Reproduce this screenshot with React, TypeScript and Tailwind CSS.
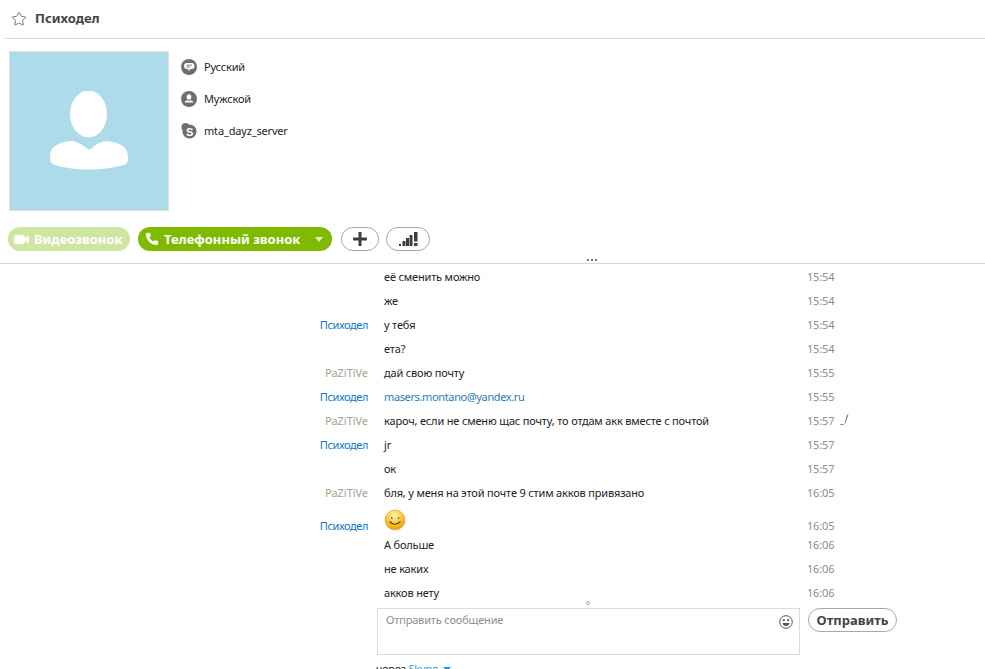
import { Star, Phone, Video } from "lucide-react";

type Msg = { name?: "p" | "z"; text: string; time: string; link?: boolean; warn?: boolean };

const messages: Msg[] = [
  { text: "её сменить можно", time: "15:54" },
  { text: "же", time: "15:54" },
  { name: "p", text: "у тебя", time: "15:54" },
  { text: "ета?", time: "15:54" },
  { name: "z", text: "дай свою почту", time: "15:55" },
  { name: "p", text: "masers.montano@yandex.ru", time: "15:55", link: true },
  { name: "z", text: "кароч, если не сменю щас почту, то отдам акк вместе с почтой", time: "15:57", warn: true },
  { name: "p", text: "jr", time: "15:57" },
  { text: "ок", time: "15:57" },
  { name: "z", text: "бля, у меня на этой почте 9 стим акков привязано", time: "16:05" },
];

const after: Msg[] = [
  { text: "А больше", time: "16:06" },
  { text: "не каких", time: "16:06" },
  { text: "акков нету", time: "16:06" },
];

function Row({ m }: { m: Msg }) {
  return (
    <div className="flex h-6 items-center pb-[2px]">
      <div className={"w-[368px] text-right " + (m.name === "p" ? "tracking-[-0.4px] text-[#0a78c8]" : "tracking-[-0.05px] text-[#a3a38f]")}>
        {m.name === "p" ? "Психодел" : m.name === "z" ? "PaZiTiVe" : ""}
      </div>
      <div className={"ml-[16px] w-[423px] " + (m.link ? "tracking-[-0.37px] text-[#2a7cb8]" : "text-[#222]")}>{m.text}</div>
      <div className="w-[33px] text-[#8c8c8c]">{m.time}</div>
      {m.warn && <WarnMark />}
    </div>
  );
}

function WarnMark() {
  return (
    <svg width="10" height="12" viewBox="0 0 10 12">
      <path d="M0 10.5h4" stroke="#999" fill="none" />
      <path d="M7 0.5L4.500 9.500h1L8.500 0.500z" fill="#888" />
    </svg>
  );
}

function Smiley() {
  return (
    <svg width="22" height="22" viewBox="0 0 22 22">
      <defs>
        <radialGradient id="face" cx="45%" cy="25%" r="80%">
          <stop offset="0%" stopColor="#fff3a0" />
          <stop offset="55%" stopColor="#fbc52e" />
          <stop offset="100%" stopColor="#ec9410" />
        </radialGradient>
      </defs>
      <circle cx="11" cy="11" r="10" fill="url(#face)" stroke="#d9962a" strokeWidth="0.6" />
      <ellipse cx="7.6" cy="8.6" rx="1.7" ry="1.3" fill="#fff" />
      <ellipse cx="14.4" cy="8.6" rx="1.7" ry="1.3" fill="#fff" />
      <circle cx="7.8" cy="8.8" r="0.9" fill="#4a3208" />
      <circle cx="14.6" cy="8.8" r="0.9" fill="#4a3208" />
      <path d="M5.5 12.5Q11 18 16.5 12.5" fill="none" stroke="#5b3c08" strokeWidth="1.1" />
    </svg>
  );
}

function InfoIcon({ kind }: { kind: "chat" | "user" | "skype" }) {
  return (
    <svg width="16" height="16" viewBox="0 0 16 16">
      {kind === "skype" ? (
        <>
          <circle cx="8.5" cy="8.5" r="7" fill="#6e6e70" />
          <circle cx="4.5" cy="4" r="4" fill="#6e6e70" />
          <text x="8.5" y="12.5" textAnchor="middle" fontSize="11" fontWeight="700" fill="#fff" fontFamily="'Liberation Sans', sans-serif">S</text>
        </>
      ) : (
        <circle cx="8" cy="8" r="8" fill="#6e6e70" />
      )}
      {kind === "chat" && (
        <>
          <path d="M6 4h4.500A3 3 0 0 1 13.500 7v0a3 3 0 0 1-3 3H9.500L7.500 12.500V10H6a3 3 0 0 1-3-3v0a3 3 0 0 1 3-3z" fill="#fff" />
          <path d="M5.500 6.200h5.500M5.500 8h3.500" stroke="#6e6e70" strokeWidth="0.9" />
        </>
      )}
      {kind === "user" && (
        <>
          <ellipse cx="8" cy="6" rx="2.3" ry="2.8" fill="#fff" />
          <path d="M3.5 11.5Q4 9.500 6.500 9.300L8 10l1.500-.7Q12 9.500 12.500 11.500z" fill="#fff" />
        </>
      )}
    </svg>
  );
}

function Avatar() {
  return (
    <div className="flex size-[160px] shrink-0 items-center justify-center border border-[#e0e0e0] bg-[#addbea] pt-[2px]">
      <svg width="80" height="82" viewBox="0 0 80 82">
        <ellipse cx="39.5" cy="23" rx="18.5" ry="23.5" fill="#fff" />
        <path d="M1 66Q1 58 6 55Q14 50 24 50Q32 52 38 57.500L40 58.500L43 57Q50 50 58 50Q68 51 74 55Q79 58 79 68Q79 73 75 74Q40 83 5 74Q1 72 1 66z" fill="#fff" />
      </svg>
    </div>
  );
}

export default function App() {
  return (
    <div className="relative h-[669px] w-[985px] overflow-hidden bg-white font-['Noto_Sans','Liberation_Sans',sans-serif] text-[11px] leading-none tracking-[-0.17px]">
      {/* title */}
      <div className="ml-[5px] flex h-[39px] items-center border-b border-[#dcdcdc] pl-[6px]">
        <Star size={16} strokeWidth={1.2} className="text-[#555]" />
        <span className="ml-[8px] -translate-y-px text-[13px] font-bold tracking-normal text-[#444]">Психодел</span>
      </div>

      {/* profile */}
      <div className="mt-3 ml-[9px] flex h-[160px]">
        <Avatar />
        <div className="ml-[12px] flex flex-col gap-4 pt-2 text-[#222]">
          {[
            { kind: "chat" as const, label: "Русский" },
            { kind: "user" as const, label: "Мужской" },
            { kind: "skype" as const, label: "mta_dayz_server" },
          ].map((row) => (
            <div key={row.label} className="flex h-4 items-center gap-[7px]">
              <InfoIcon kind={row.kind} />
              <span className="-translate-y-px">{row.label}</span>
            </div>
          ))}
        </div>
      </div>

      {/* call buttons */}
      <div className="mt-4 ml-[8px] flex h-6 items-center text-[13px] font-bold tracking-normal text-white">
        <div className="flex h-6 w-[122px] items-center rounded-full bg-[#cfe6a0] pl-[5px]">
          <Video size={17} fill="#fff" strokeWidth={1} />
          <span className="ml-[4px]">Видеозвонок</span>
        </div>
        <div className="ml-[8px] flex h-6 w-[194px] items-center rounded-full bg-[#7fba00] pl-[7px]">
          <Phone size={14} fill="#fff" strokeWidth={1} />
          <span className="ml-[5px]">Телефонный звонок</span>
          <svg width="10" height="5" viewBox="0 0 10 5" className="ml-[14px]">
            <path d="M1 0h8L5 5z" fill="#e6f3c4" />
          </svg>
        </div>
        <div className="ml-[9px] flex h-6 w-[38px] items-center justify-center rounded-full border border-[#a8a8a8]">
          <svg width="14" height="14" viewBox="0 0 14 14">
            <path d="M5.5 0h3v5.500H14v3H8.500V14h-3V8.500H0v-3h5.500z" fill="#3c3c46" />
          </svg>
        </div>
        <div className="ml-[7px] flex h-6 w-[44px] items-center justify-center rounded-full border border-[#a8a8a8]">
          <svg width="19" height="14" viewBox="0 0 19 14">
            <path d="M0 12h2v2H0zM3.500 9h3v5h-3zM7 6h3v8H7zM10.500 3h3v11h-3z" fill="#3c3c46" />
            <path d="M15 0h3.500v9.500H15zM15 11h3.500v3H15z" fill="#3c3c46" />
          </svg>
        </div>
      </div>

      {/* divider */}
      <div className="mt-3 h-px bg-[#d8d8d8]" />
      <div className="absolute top-[259px] left-[587px] flex gap-[2px]">
        <span className="size-[2px] bg-[#5f7a9c]" />
        <span className="size-[2px] bg-[#5f7a9c]" />
        <span className="size-[2px] bg-[#5f7a9c]" />
      </div>

      {/* conversation */}
      <div className="mt-px">
        {messages.map((m, i) => (
          <Row key={i} m={m} />
        ))}
        <div className="flex h-[28px] items-end">
          <div className="w-[368px] pb-[2px] text-right tracking-[-0.4px] text-[#0a78c8]">Психодел</div>
          <div className="ml-[16px] w-[423px] pb-[2px]">
            <Smiley />
          </div>
          <div className="w-[33px] pb-[2px] text-[#8c8c8c]">16:05</div>
        </div>
        {after.map((m, i) => (
          <Row key={i} m={m} />
        ))}
      </div>
      <span className="absolute top-[601px] left-[586px] size-[4px] rounded-full border border-[#8fb8c8]" />

      {/* composer */}
      <div className="mt-[3px] ml-[377px] flex items-start">
        <div className="relative h-[47px] w-[423px] border border-[#dcdcdc] px-2 pt-[5px] text-[#8e8e8e]">
          Отправить сообщение
          <svg width="14" height="14" viewBox="0 0 14 14" className="absolute top-[6px] right-[6px]">
            <circle cx="7" cy="7" r="6.3" fill="none" stroke="#555" />
            <circle cx="4.8" cy="5.2" r="1.1" fill="#555" />
            <circle cx="9.2" cy="5.2" r="1.1" fill="#555" />
            <path d="M3.5 8h7Q10 11 7 11T3.5 8z" fill="#555" />
          </svg>
        </div>
        <div className="ml-2 flex h-6 w-[89px] items-center justify-center rounded-full border border-[#a8a8a8] text-[13px] font-bold tracking-normal text-[#444]">
          Отправить
        </div>
      </div>
      <div className="mt-2 ml-[376px] flex items-center text-[#222]">
        через&nbsp;<span className="text-[#2a8fd0]">Skype</span>
        <svg width="8" height="4" viewBox="0 0 8 4" className="ml-[5px]">
          <path d="M0 0h8L4 4z" fill="#2a8fd0" />
        </svg>
      </div>
    </div>
  );
}
